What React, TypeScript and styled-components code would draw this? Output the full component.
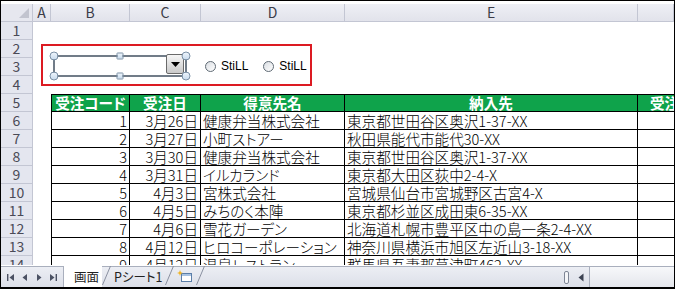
import React from 'react';
import styled, { createGlobalStyle } from 'styled-components';

const JP = `"Noto Sans CJK JP", "Noto Sans", sans-serif`;

const GlobalStyle = createGlobalStyle`
  html, body { margin: 0; padding: 0; background: #fff; }
  body { font-family: ${JP}; }
`;

const COLS = '32px 18px 79px 71px 144px 293px 1fr';

const Frame = styled.div`
  width: 675px;
  height: 289px;
  box-sizing: border-box;
  border: 1px solid #000;
  border-bottom-width: 2px;
  display: flex;
  flex-direction: column;
  overflow: hidden;
  background: #fff;
`;

const Sheet = styled.div`
  position: relative;
  flex: 1;
  min-height: 0;
  overflow: hidden;
  padding-top: 3px;
  display: grid;
  grid-template-columns: ${COLS};
  grid-auto-rows: 18px;
  align-content: start;
`;

const HeadBase = styled.div`
  box-sizing: border-box;
  background: #e6e7ef;
  border-right: 1px solid #c3c6d3;
  border-bottom: 1px solid #c3c6d3;
  color: #3c3c48;
  font-size: 14px;
  line-height: 17px;
  text-align: center;
  overflow: hidden;
`;

const Corner = styled(HeadBase)`
  position: relative;
  &::after {
    content: '';
    position: absolute;
    right: 3px;
    bottom: 3px;
    border-left: 10px solid transparent;
    border-bottom: 10px solid #c2c4cf;
  }
`;

const ColHead = styled(HeadBase)`
  background: linear-gradient(#eeeff5, #e2e3eb);
`;

const RowHead = styled(HeadBase)`
  background: #e4e6ef;
  color: #4a4a56;
`;

const Blank = styled.div``;

const Cell = styled.div<{ $align?: string; $first?: boolean; $open?: boolean }>`
  box-sizing: border-box;
  border-right: ${(p) => (p.$open ? 'none' : '1px solid #000')};
  border-bottom: 1px solid #000;
  border-left: ${(p) => (p.$first ? '1px solid #000' : 'none')};
  font-size: 14.6px;
  font-weight: 300;
  font-feature-settings: 'palt';
  line-height: 17px;
  padding: 0 2px;
  white-space: nowrap;
  overflow: hidden;
  text-align: ${(p) => p.$align || 'left'};
  color: #000;
`;

const HeadCell = styled(Cell)`
  background: #0fa34b;
  color: #fff;
  font-weight: bold;
  border-top: 1px solid #000;
  line-height: 16px;
`;

/* form controls drawn over the sheet */
const ControlGroup = styled.div`
  position: absolute;
  left: 40px;
  top: 43px;
  width: 271px;
  height: 42px;
  box-sizing: border-box;
  border: 2px solid #dc1a22;
  display: flex;
  align-items: center;
  padding-left: 10px;
`;

const Combo = styled.div`
  position: relative;
  width: 134px;
  height: 22px;
  box-sizing: border-box;
  border: 2px solid #717c88;
  margin-top: 2px;
`;

const DropButton = styled.div`
  position: absolute;
  right: 1px;
  top: -3px;
  width: 18px;
  height: 20px;
  box-sizing: border-box;
  border: 1px solid #6a6a6a;
  border-radius: 2px;
  background: linear-gradient(#f6f6f6, #c9c9c9);
  display: flex;
  align-items: center;
  justify-content: center;
`;

const Handle = styled.div<{ $round?: boolean }>`
  position: absolute;
  width: ${(p) => (p.$round ? 9 : 7)}px;
  height: ${(p) => (p.$round ? 9 : 7)}px;
  box-sizing: border-box;
  border: 1px solid #7a90a6;
  border-radius: ${(p) => (p.$round ? '50%' : '1px')};
  background: linear-gradient(#eef5fc, #c9dcee);
  transform: translate(-50%, -50%);
`;

const RadioList = styled.div`
  display: flex;
  align-items: center;
  gap: 15px;
  margin-left: 18px;
  margin-top: 2px;
`;

const RadioOption = styled.label`
  display: flex;
  align-items: center;
  gap: 5px;
  font-family: "Liberation Sans", Arial, sans-serif;
  font-size: 12px;
  color: #000;
`;

const RadioDot = styled.span`
  width: 11px;
  height: 11px;
  box-sizing: border-box;
  border: 1px solid #5f6a74;
  border-radius: 50%;
  background: linear-gradient(135deg, #d9dde2, #fff);
`;

/* bottom bar */
const TabBar = styled.div`
  height: 20px;
  margin-top: 1px;
  flex-shrink: 0;
  display: flex;
  background: linear-gradient(#eceef4, #dcdfe8);
  border-top: 1px solid #a9afbd;
`;

const TabArea = styled.div`
  width: 562px;
  display: flex;
  align-items: stretch;
`;

const Nav = styled.div`
  width: 58px;
  display: flex;
  align-items: center;
  justify-content: space-around;
  padding: 0 2px;
  border-right: 1px solid #a9afbd;
`;

const Tab = styled.div<{ $active?: boolean }>`
  display: flex;
  align-items: center;
  padding: 0 3px 0 ${(p) => (p.$active ? 10 : 3)}px;
  font-size: 12.5px;
  font-feature-settings: 'palt';
  color: #222;
  background: ${(p) => (p.$active ? '#fff' : 'transparent')};
  margin-top: -1px;
`;

const Slant = styled.svg`
  display: block;
  flex-shrink: 0;
  margin-top: -1px;
`;

const ScrollArea = styled.div`
  flex: 1;
  display: flex;
  align-items: center;
`;

const SplitHandle = styled.div`
  width: 5px;
  height: 13px;
  margin-left: 1px;
  box-sizing: border-box;
  border: 1px solid #7e8595;
  border-radius: 2px;
  background: #f4f5f8;
`;

const ArrowBtn = styled.div`
  width: 17px;
  height: 100%;
  display: flex;
  align-items: center;
  justify-content: center;
  border-right: 1px solid #a9afbd;
  margin-left: 3px;
`;

const Track = styled.div`
  flex: 1;
  height: 100%;
  background: linear-gradient(#f7f8fa, #e4e6ec);
`;

type Row = [string, string, string, string];
const rows: Row[] = [
  ['1', '3月26日', '健康弁当株式会社', '東京都世田谷区奥沢1-37-XX'],
  ['2', '3月27日', '小町ストアー', '秋田県能代市能代30-XX'],
  ['3', '3月30日', '健康弁当株式会社', '東京都世田谷区奥沢1-37-XX'],
  ['4', '3月31日', 'イルカランド', '東京都大田区荻中2-4-X'],
  ['5', '4月3日', '宮株式会社', '宮城県仙台市宮城野区古宮4-X'],
  ['6', '4月5日', 'みちのく本陣', '東京都杉並区成田東6-35-XX'],
  ['7', '4月6日', '雪花ガーデン', '北海道札幌市豊平区中の島一条2-4-XX'],
  ['8', '4月12日', 'ヒロコーポレーション', '神奈川県横浜市旭区左近山3-18-XX'],
  ['9', '4月12日', '温泉レストラン', '群馬県吾妻郡草津町462-XX'],
];

const letters = ['A', 'B', 'C', 'D', 'E', ''];

const NavIcon: React.FC<{ dir: 'first' | 'prev' | 'next' | 'last' }> = ({ dir }) => (
  <svg width="9" height="9" viewBox="0 0 9 9">
    {dir === 'first' && (
      <>
        <rect x="1" y="1" width="1.4" height="7" fill="#4b5163" />
        <path d="M8 1 L3.5 4.5 L8 8 Z" fill="#4b5163" />
      </>
    )}
    {dir === 'prev' && <path d="M7 1 L2.5 4.5 L7 8 Z" fill="#4b5163" />}
    {dir === 'next' && <path d="M2 1 L6.5 4.5 L2 8 Z" fill="#4b5163" />}
    {dir === 'last' && (
      <>
        <path d="M1 1 L5.5 4.5 L1 8 Z" fill="#4b5163" />
        <rect x="6.6" y="1" width="1.4" height="7" fill="#4b5163" />
      </>
    )}
  </svg>
);

const SlantLine: React.FC = () => (
  <Slant width="9" height="20" viewBox="0 0 9 20">
    <line x1="0.5" y1="19" x2="8.5" y2="0" stroke="#8a90a0" strokeWidth="1" />
  </Slant>
);

export default function App() {
  return (
    <>
      <GlobalStyle />
      <Frame>
        <Sheet>
          <Corner />
          {letters.map((l, i) => (
            <ColHead key={i}>{l}</ColHead>
          ))}

          {[1, 2, 3, 4].map((n) => (
            <React.Fragment key={n}>
              <RowHead>{n}</RowHead>
              {letters.map((_, i) => (
                <Blank key={i} />
              ))}
            </React.Fragment>
          ))}

          <RowHead>5</RowHead>
          <Blank />
          <HeadCell $first $align="center">受注コード</HeadCell>
          <HeadCell $align="center">受注日</HeadCell>
          <HeadCell $align="center">得意先名</HeadCell>
          <HeadCell $align="center">納入先</HeadCell>
          <HeadCell $open style={{ paddingLeft: 12 }}>受注数</HeadCell>

          {rows.map((r, i) => (
            <React.Fragment key={i}>
              <RowHead>{i + 6}</RowHead>
              <Blank />
              <Cell $first $align="right">{r[0]}</Cell>
              <Cell $align="right">{r[1]}</Cell>
              <Cell>{r[2]}</Cell>
              <Cell>{r[3]}</Cell>
              <Cell $open />
            </React.Fragment>
          ))}

          <ControlGroup>
            <Combo>
              <DropButton>
                <svg width="9" height="5" viewBox="0 0 9 5">
                  <path d="M0 0 H9 L4.5 5 Z" fill="#000" />
                </svg>
              </DropButton>
              <Handle $round style={{ left: -1, top: -1 }} />
              <Handle $round style={{ left: 'calc(100% + 1px)', top: -1 }} />
              <Handle $round style={{ left: -1, top: 'calc(100% + 1px)' }} />
              <Handle $round style={{ left: 'calc(100% + 1px)', top: 'calc(100% + 1px)' }} />
              <Handle style={{ left: '50%', top: -1 }} />
              <Handle style={{ left: '50%', top: 'calc(100% + 1px)' }} />
            </Combo>
            <RadioList>
              <RadioOption>
                <RadioDot />
                StiLL
              </RadioOption>
              <RadioOption>
                <RadioDot />
                StiLL
              </RadioOption>
            </RadioList>
          </ControlGroup>
        </Sheet>

        <TabBar>
          <TabArea>
            <Nav>
              <NavIcon dir="first" />
              <NavIcon dir="prev" />
              <NavIcon dir="next" />
              <NavIcon dir="last" />
            </Nav>
            <Tab $active>画面</Tab>
            <SlantLine />
            <Tab>Pシート1</Tab>
            <SlantLine />
            <Tab>
              <svg width="16" height="13" viewBox="0 0 16 13">
                <rect x="4.5" y="3.5" width="10" height="8" fill="#fff" stroke="#5b7ea8" />
                <rect x="5" y="4" width="9" height="2" fill="#a9c3e2" />
                <path d="M3 0 L3.8 2.2 L6 3 L3.8 3.8 L3 6 L2.2 3.8 L0 3 L2.2 2.2 Z" fill="#f2b31c" />
              </svg>
            </Tab>
            <SlantLine />
          </TabArea>
          <ScrollArea>
            <SplitHandle />
            <ArrowBtn>
              <svg width="6" height="9" viewBox="0 0 6 9">
                <path d="M5.5 0.5 L0.5 4.5 L5.5 8.5 Z" fill="#3c4252" />
              </svg>
            </ArrowBtn>
            <Track />
          </ScrollArea>
        </TabBar>
      </Frame>
    </>
  );
}
